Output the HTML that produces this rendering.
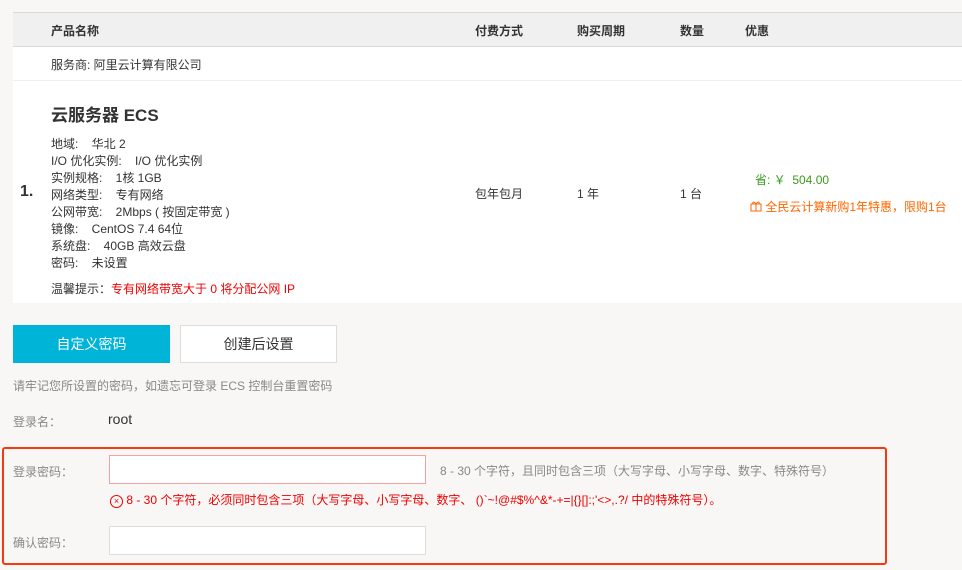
<!DOCTYPE html>
<html><head><meta charset="utf-8"><style>
body{margin:0;width:962px;height:570px;background:#f8f7f6;font-family:"Liberation Sans","Noto Sans CJK SC",sans-serif;font-size:12px;color:#333;position:relative;overflow:hidden}
.a{position:absolute;white-space:nowrap}
.hd{position:absolute;left:13px;top:12px;width:949px;height:33px;background:#f0f0f0;border-top:1px solid #d8d8d8;border-bottom:1px solid #d8d8d8}
.r1{position:absolute;left:13px;top:47px;width:949px;height:33px;background:#fff;border-bottom:1px solid #eee}
.r2{position:absolute;left:13px;top:81px;width:949px;height:222px;background:#fff}
.inp{position:absolute;background:#fff;border:1px solid #ddd}
</style></head><body>
<div class="hd"></div><div class="r1"></div><div class="r2"></div>
<div class="a" style="left:51px;top:22px;font-weight:bold">产品名称</div>
<div class="a" style="left:475px;top:22px;font-weight:bold">付费方式</div>
<div class="a" style="left:577px;top:22px;font-weight:bold">购买周期</div>
<div class="a" style="left:680px;top:22px;font-weight:bold">数量</div>
<div class="a" style="left:745px;top:22px;font-weight:bold">优惠</div>
<div class="a" style="left:51px;top:56px">服务商: 阿里云计算有限公司</div>
<div class="a" style="left:51px;top:101px;font-size:17px;font-weight:bold">云服务器 ECS</div>
<div class="a" style="left:20px;top:183px;font-size:16px;font-weight:bold">1.</div>
<div class="a" style="left:51px;top:136px;line-height:17px">地域:&nbsp;&nbsp;&nbsp;&nbsp;华北 2<br>I/O 优化实例:&nbsp;&nbsp;&nbsp;&nbsp;I/O 优化实例<br>实例规格:&nbsp;&nbsp;&nbsp;&nbsp;1核 1GB<br>网络类型:&nbsp;&nbsp;&nbsp;&nbsp;专有网络<br>公网带宽:&nbsp;&nbsp;&nbsp;&nbsp;2Mbps ( 按固定带宽 )<br>镜像:&nbsp;&nbsp;&nbsp;&nbsp;CentOS 7.4 64位<br>系统盘:&nbsp;&nbsp;&nbsp;&nbsp;40GB 高效云盘<br>密码:&nbsp;&nbsp;&nbsp;&nbsp;未设置</div>
<div class="a" style="left:51px;top:280px">温馨提示：<span style="color:#e00">专有网络带宽大于 0 将分配公网 IP</span></div>
<div class="a" style="left:475px;top:185px">包年包月</div>
<div class="a" style="left:577px;top:185px">1 年</div>
<div class="a" style="left:680px;top:185px">1 台</div>
<div class="a" style="left:755px;top:171px;color:#3a9a1e">省: ￥&nbsp;&nbsp;504.00</div>
<div class="a" style="left:750px;top:198px;color:#f60">
<svg width="12" height="12" viewBox="0 0 12 12" style="vertical-align:-1px"><rect x="1" y="4" width="10" height="7" fill="none" stroke="#f60"/><line x1="6" y1="4" x2="6" y2="11" stroke="#f60"/><path d="M6 4C4 1 2 2 3 4M6 4C8 1 10 2 9 4" fill="none" stroke="#f60"/></svg> 全民云计算新购1年特惠，限购1台</div>
<div class="a" style="left:13px;top:325px;width:157px;height:38px;background:#00b4d8;color:#fff;font-size:14px;line-height:38px;text-align:center">自定义密码</div>
<div class="a" style="left:180px;top:325px;width:155px;height:36px;background:#fff;border:1px solid #ddd;font-size:14px;line-height:36px;text-align:center">创建后设置</div>
<div class="a" style="left:13px;top:377px;color:#888">请牢记您所设置的密码，如遗忘可登录 ECS 控制台重置密码</div>
<div class="a" style="left:13px;top:413px;color:#888">登录名：</div>
<div class="a" style="left:108px;top:411px;font-size:14px">root</div>
<div class="a" style="left:2px;top:447px;width:881px;height:114px;border:2px solid #f53a10;border-radius:3px"></div>
<div class="a" style="left:13px;top:463px;color:#888">登录密码：</div>
<div class="inp" style="left:109px;top:455px;width:315px;height:27px;border-color:#f8a0a0"></div>
<div class="a" style="left:440px;top:462px;color:#888">8 - 30 个字符，且同时包含三项（大写字母、小写字母、数字、特殊符号）</div>
<div class="a" style="left:110px;top:491px;color:#e00"><span style="display:inline-block;width:11px;height:11px;border:1px solid #e00;border-radius:50%;font-size:9px;line-height:11px;text-align:center;vertical-align:0">×</span> 8 - 30 个字符，必须同时包含三项（大写字母、小写字母、数字、 ()`~!@#$%^&amp;*-+=|{}[]:;'&lt;&gt;,.?/ 中的特殊符号）。</div>
<div class="a" style="left:13px;top:534px;color:#888">确认密码：</div>
<div class="inp" style="left:109px;top:526px;width:315px;height:27px"></div>
</body></html>
